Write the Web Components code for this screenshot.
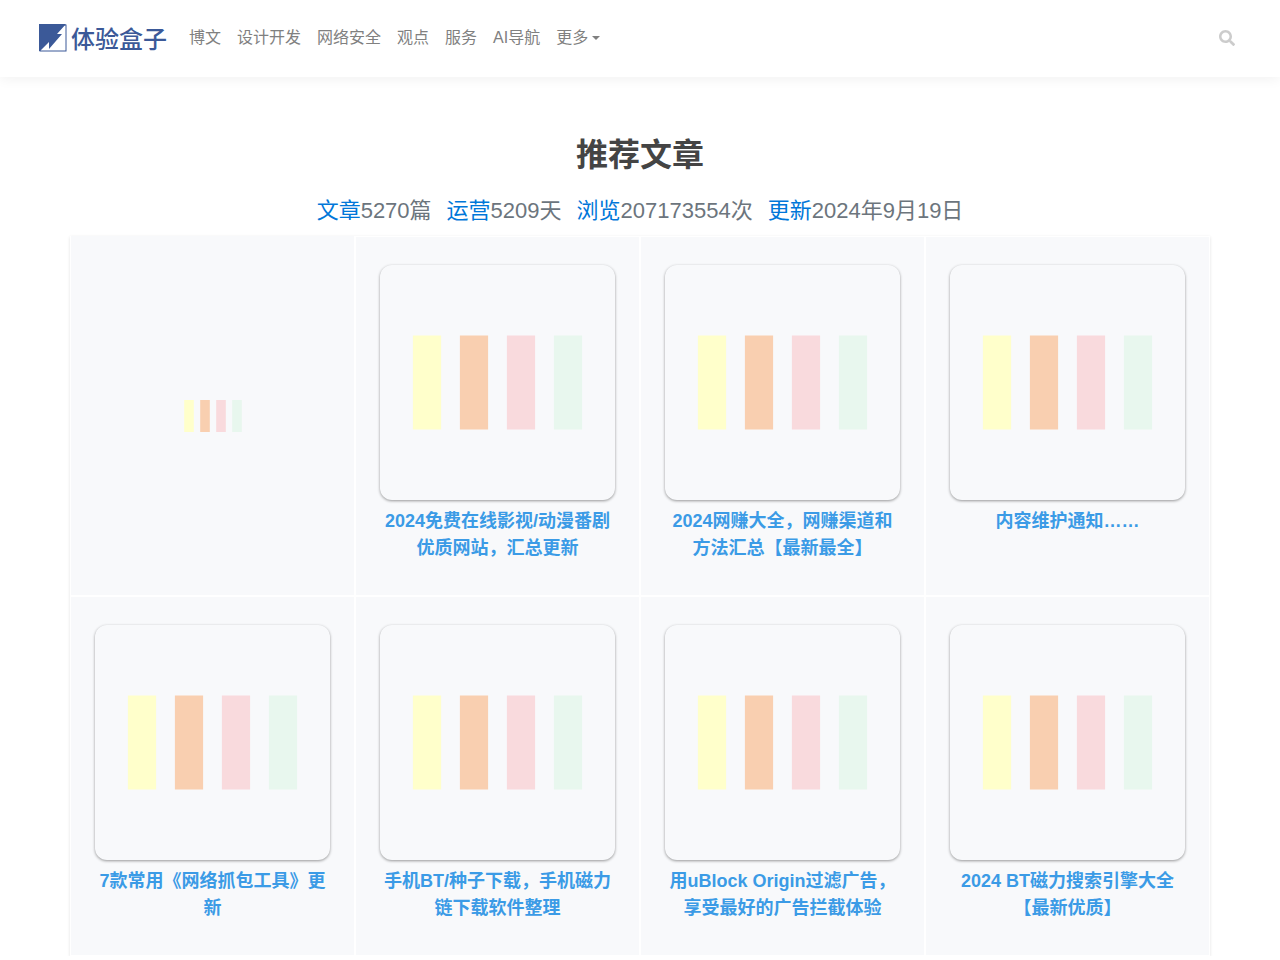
<!DOCTYPE html>
<html lang="zh-CN">
<head>
<meta charset="utf-8">
<title>体验盒子</title>
<style>
body { margin: 0; background: #fff; color: #444; font: 16px/24px "Liberation Sans", "Noto Sans CJK SC", sans-serif; }
</style>
</head>
<body>
<site-header>
  <nav-item>博文</nav-item>
  <nav-item>设计开发</nav-item>
  <nav-item>网络安全</nav-item>
  <nav-item>观点</nav-item>
  <nav-item>服务</nav-item>
  <nav-item>AI导航</nav-item>
  <nav-item menu>更多</nav-item>
</site-header>
<featured-section>
  <span slot="title">推荐文章</span>
  <stat-item slot="stats" label="文章">5270篇</stat-item>
  <stat-item slot="stats" label="运营">5209天</stat-item>
  <stat-item slot="stats" label="浏览">207173554次</stat-item>
  <stat-item slot="stats" label="更新">2024年9月19日</stat-item>
  <promo-card></promo-card>
  <article-card>2024免费在线影视/动漫番剧优质网站，汇总更新</article-card>
  <article-card>2024网赚大全，网赚渠道和方法汇总【最新最全】</article-card>
  <article-card>内容维护通知……</article-card>
  <article-card>7款常用《网络抓包工具》更新</article-card>
  <article-card>手机BT/种子下载，手机磁力链下载软件整理</article-card>
  <article-card>用uBlock Origin过滤广告，享受最好的广告拦截体验</article-card>
  <article-card>2024 BT磁力搜索引擎大全【最新优质】</article-card>
</featured-section>
<script>
function define(name, html) {
  const template = document.createElement('template');
  template.innerHTML = html;
  customElements.define(name, class extends HTMLElement {
    connectedCallback() {
      if (this.shadowRoot) return;
      this.attachShadow({ mode: 'open' }).append(template.content.cloneNode(true));
      const label = this.shadowRoot.querySelector('[data-label]');
      if (label) label.textContent = this.getAttribute('label');
    }
  });
}

define('site-logo', `
<style>
:host { display: block; }
a { display: flex; align-items: center; gap: 4px; color: #3b5998; text-decoration: none; font-size: 24px; line-height: 28px; font-weight: 500; font-family: "Noto Sans CJK SC", sans-serif; }
svg { display: block; width: 28px; height: 28px; }
</style>
<a href="#"><svg viewBox="0 0 28 28" aria-hidden="true"><rect x="1" y="1" width="26" height="26" fill="#fff" stroke="#3b5998"/><path d="M0 0H27L18 10H23L10 25V18L1 27H0Z" fill="#3b5998"/></svg><span>体验盒子</span></a>`);

define('nav-item', `
<style>
:host { display: block; }
a { display: flex; align-items: center; gap: 4px; padding: 8px; color: #808080; text-decoration: none; white-space: nowrap; }
i { display: none; border: solid transparent; border-width: 4px 4px 0; border-top-color: currentColor; }
:host([menu]) i { display: block; }
</style>
<a href="#"><slot></slot><i></i></a>`);

define('site-header', `
<style>
:host { display: block; background: #fff; box-shadow: 0 2px 12px rgba(0,0,0,.06); }
header { display: flex; align-items: center; box-sizing: border-box; min-height: 77px; padding: 0 37px 1px 39px; }
nav { display: flex; margin-left: 14px; flex: 1; }
button { display: block; border: 0; background: none; padding: 8px; margin: 0; color: #ccc; }
svg { display: block; width: 16px; height: 16px; }
</style>
<header>
<site-logo></site-logo>
<nav><slot></slot></nav>
<button type="button" aria-label="搜索"><svg viewBox="0 0 512 512" fill="currentColor"><path d="M505 442.700 405.300 343c-4.500-4.500-10.600-7-17-7H372c27.600-35.300 44-79.700 44-128C416 93.100 322.900 0 208 0S0 93.100 0 208s93.100 208 208 208c48.300 0 92.700-16.400 128-44v16.300c0 6.400 2.500 12.500 7 17l99.700 99.700c9.400 9.400 24.600 9.400 33.900 0l28.300-28.300c9.400-9.400 9.400-24.600.1-34zM208 336c-70.700 0-128-57.200-128-128 0-70.700 57.200-128 128-128 70.700 0 128 57.200 128 128 0 70.700-57.200 128-128 128z"/></svg></button>
</header>`);

define('stat-item', `
<style>
:host { display: block; color: #6c757d; white-space: nowrap; }
a { color: #0077d9; text-decoration: none; }
</style>
<a href="#" data-label></a><slot></slot>`);

define('featured-section', `
<style>
:host { display: block; max-width: 1140px; margin: 0 auto; padding-top: 54px; }
h2 { margin: 0; text-align: center; font-size: 32px; line-height: 48px; font-weight: 700; color: #444; }
.stats { display: flex; flex-wrap: wrap; justify-content: center; gap: 0 15px; margin-top: 15px; padding-bottom: 8px; font-size: 22px; line-height: 34px; }
.grid { display: grid; grid-template-columns: repeat(4, 1fr); grid-auto-rows: minmax(360px, auto); box-shadow: 0 1px 3px rgba(0,0,0,.12); }
</style>
<section>
<h2><slot name="title"></slot></h2>
<div class="stats"><slot name="stats"></slot></div>
<div class="grid"><slot></slot></div>
</section>`);

define('bars-placeholder', `
<style>
:host { display: block; }
svg { display: block; width: 100%; height: auto; }
</style>
<svg viewBox="0 0 100 100" aria-hidden="true"><path fill="#ffffcb" d="M14 30h12v40H14z"/><path fill="#f9cfb0" d="M34 30h12v40H34z"/><path fill="#f9dadd" d="M54 30h12v40H54z"/><path fill="#e8f7ee" d="M74 30h12v40H74z"/></svg>`);

define('promo-card', `
<style>
:host { display: flex; align-items: center; justify-content: center; box-sizing: border-box; background: #f8f9fb; border: 1px solid #fff; border-top: 0; }
bars-placeholder { width: 80px; }
</style>
<bars-placeholder></bars-placeholder>`);

define('article-card', `
<style>
:host { display: block; box-sizing: border-box; padding: 28px 24px 24px; background: #f8f9fb; border: 1px solid #fff; text-align: center; }
a { display: block; color: #3b9be6; text-decoration: none; }
bars-placeholder { border-radius: 12px; box-shadow: 0 1px 3px rgba(0,0,0,.4); }
h3 { margin: 8px 0 0; font-size: 18px; line-height: 27px; font-weight: 700; }
</style>
<a href="#"><bars-placeholder></bars-placeholder><h3><slot></slot></h3></a>`);
</script>
</body>
</html>
